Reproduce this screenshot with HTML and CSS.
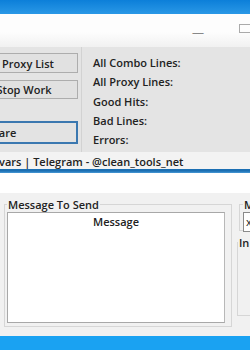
FILE: index.html
```html
<!DOCTYPE html>
<html>
<head>
<meta charset="utf-8">
<link rel="stylesheet" href="styles.css">
</head>
<body>
<div class="screen">
  <div class="bluebar"></div>
  <div class="titlebar">
    <span class="min">—</span>
    <span class="max"></span>
  </div>
  <div class="panel">
    <div class="leftcol">
      <div class="btn b1">Proxy List</div>
      <div class="btn b2">Stop Work</div>
      <div class="btn b3 focus">Share</div>
    </div>
    <div class="stats">
      <div class="stat">All Combo Lines:</div>
      <div class="stat">All Proxy Lines:</div>
      <div class="stat">Good Hits:</div>
      <div class="stat">Bad Lines:</div>
      <div class="stat">Errors:</div>
    </div>
  </div>
  <div class="status"><span class="stext">vars | Telegram - @clean_tools_net</span></div>
  <div class="blueline"></div>
  <div class="gap"></div>
  <div class="lower">
    <fieldset class="group msg">
      <legend>Message To Send</legend>
      <div class="textarea">Message</div>
    </fieldset>
    <div class="rightcol">
      <fieldset class="group small">
        <legend>M</legend>
        <div class="input">x</div>
      </fieldset>
      <fieldset class="group small2">
        <legend>In</legend>
      </fieldset>
    </div>
  </div>
  <div class="taskbar"></div>
</div>
</body>
</html>
```
FILE: styles.css
```css
html, body {
  margin: 0;
  padding: 0;
  background: #ffffff;
}
.screen {
  width: 250px;
  height: 350px;
  overflow: hidden;
  display: flex;
  flex-direction: column;
  font-family: "Open Sans", "DejaVu Sans", sans-serif;
  font-size: 11px;
  font-weight: 600;
  color: #222;
}
.bluebar {
  height: 14px;
  flex: none;
  background: linear-gradient(#0c7fd9, #2a98e6);
}
.titlebar {
  height: 33px;
  flex: none;
  background: linear-gradient(#fdfdfd 55%, #f1f1f1);
  display: flex;
  align-items: flex-start;
  justify-content: flex-end;
  padding: 10px 0 0 0;
  box-sizing: border-box;
  color: #888;
  font-weight: 400;
}
.min {
  font-size: 12px;
  margin-top: 3px;
  margin-right: 35px;
  line-height: 12px;
}
.max {
  width: 11px;
  height: 7px;
  border: 1px solid #aaa;
  margin-top: 0px;
  margin-right: -2px;
}
.panel {
  height: 105px;
  flex: none;
  background: #e4e4e4;
  display: flex;
  box-sizing: border-box;
}
.leftcol {
  width: 82px;
  flex: none;
  border-right: 1px solid #d2d2d2;
  padding-top: 6px;
  box-sizing: border-box;
  display: flex;
  flex-direction: column;
  align-items: flex-end;
  padding-right: 3px;
}
.btn {
  width: 100px;
  height: 20px;
  flex: none;
  box-sizing: border-box;
  border: 1px solid #adadad;
  background: #e1e1e1;
  display: flex;
  align-items: center;
  justify-content: center;
  color: #222;
}
.b2 {
  margin-top: 7px;
  height: 19px;
  width: 108px;
}
.b3 {
  margin-top: 22px;
  height: 23px;
  width: 154px;
}
.focus {
  border: 2px solid #3b78b0;
  background: #e3e3e3;
}
.stats {
  padding: 6px 0 0 11px;
  display: flex;
  flex-direction: column;
}
.stat {
  height: 19.25px;
  line-height: 19px;
}
.status {
  height: 17px;
  flex: none;
  background: #f3f3f3;
  line-height: 17px;
  padding-top: 1px;
  box-sizing: border-box;
}
.stext {
  margin-left: -1px;
}
.blueline {
  height: 4px;
  flex: none;
  background: linear-gradient(#1b6fb3 50%, #4a9ad6);
}
.gap {
  height: 20px;
  flex: none;
  background: #ffffff;
}
.lower {
  height: 143px;
  flex: none;
  background: #f1f1f1;
  display: flex;
  padding: 5px 0 0 4px;
  box-sizing: border-box;
}
.group {
  margin: 0;
  border: 1px solid #d6d6d6;
  padding: 0;
  box-sizing: border-box;
}
.group legend {
  padding: 0 1px;
  margin-left: 0;
  line-height: 13px;
}
.msg {
  width: 228px;
  height: 129px;
  flex: none;
  padding: 1px 6px 3px 2px;
}
.textarea {
  height: 111px;
  background: #ffffff;
  border: 1px solid #a8a8a8;
  border-right-color: #b8b8b8;
  box-sizing: border-box;
  text-align: center;
  line-height: 18px;
}
.rightcol {
  display: flex;
  flex-direction: column;
  margin-left: 7px;
}
.small {
  width: 40px;
  height: 33px;
  padding: 1px 0 0 3px;
}
.input {
  height: 20px;
  width: 40px;
  border: 1px solid #8a8a8a;
  background: #fff;
  box-sizing: border-box;
  line-height: 18px;
  padding-left: 2px;
  font-weight: 400;
}
.small2 {
  width: 40px;
  height: 80px;
  margin-top: 5px;
  margin-left: -2px;
}
.taskbar {
  height: 14px;
  flex: none;
  background: #1aa2f2;
}
```
